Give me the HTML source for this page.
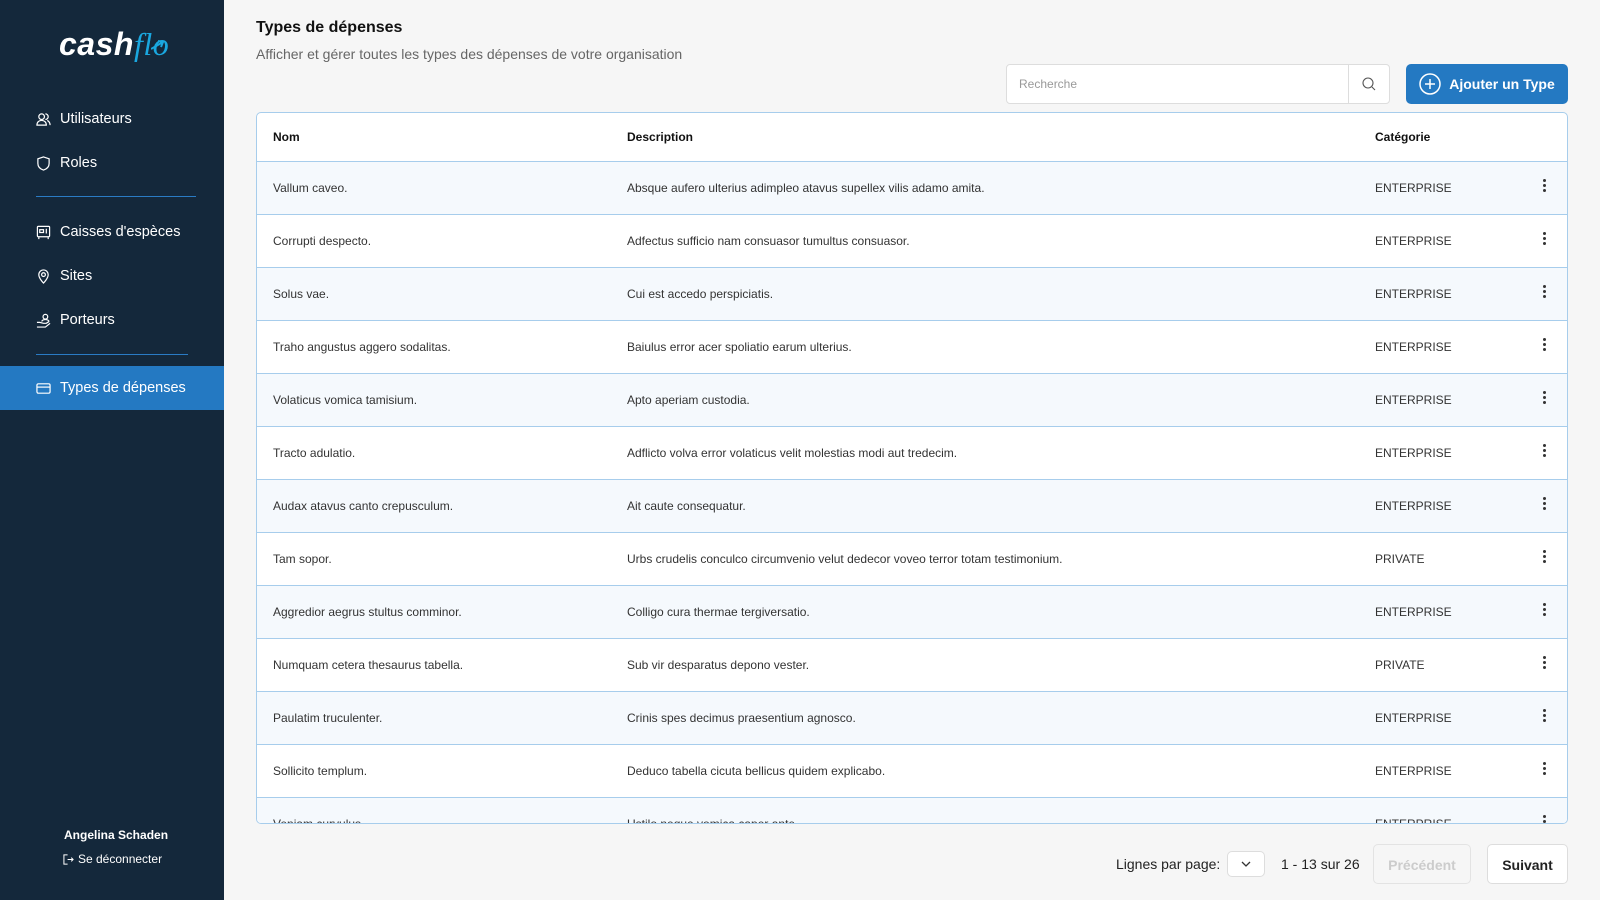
<!DOCTYPE html>
<html><head><meta charset="utf-8"><style>
*{box-sizing:border-box;margin:0;padding:0}
body{width:1600px;height:900px;overflow:hidden;background:#f6f6f6;font-family:"Liberation Sans",sans-serif;position:relative;color:#222}
.sb{position:absolute;left:0;top:0;width:224px;height:900px;background:#14283b;color:#fff}
.logo{position:absolute;left:59px;top:26px;font-size:32px;font-style:italic;font-weight:bold;letter-spacing:0.5px}
.logo span{color:#1aa7df;font-family:"Liberation Serif",serif;font-weight:normal}
.nav{position:absolute;left:36px;font-size:14.5px;display:flex;align-items:center;gap:9px}
.nav svg{width:15px;height:15px}
.div{position:absolute;left:36px;height:1px;background:#2a7bc4}
.act{position:absolute;left:0;top:366px;width:224px;height:44px;background:#2479c2}
.h1{position:absolute;left:256px;top:19px;font-size:16px;font-weight:bold;color:#111}
.sub{position:absolute;left:256px;top:46px;font-size:14px;color:#666}
.search{position:absolute;left:1006px;top:64px;width:384px;height:40px;background:#fff;border:1px solid #ddd;border-radius:4px}
.search .ph{position:absolute;left:12px;top:12px;font-size:12px;color:#999}
.search .ic{position:absolute;right:0;top:0;width:41px;height:38px;border-left:1px solid #ddd}
.btn{position:absolute;left:1406px;top:64px;width:162px;height:40px;background:#2479c2;border-radius:5px;color:#fff;font-size:14px;font-weight:bold;display:flex;align-items:center;justify-content:center;gap:8px}
.tbl{position:absolute;left:256px;top:112px;width:1312px;height:712px;background:#fff;border:1px solid #a7cdec;border-radius:5px;overflow:hidden}
.row{position:absolute;left:0;width:1310px;height:53px;border-bottom:1px solid #a7cdec;font-size:12px;color:#333}
.row div{position:absolute;top:19px}
.row .c1{left:16px}.row .c2{left:370px}.row .c3{left:1118px}
.row .d{left:1286px;top:17px;width:3px}
.row .d i{display:block;width:3px;height:3px;border-radius:50%;background:#333;margin-bottom:2px}
.hd{height:49px;font-weight:bold;color:#111}
.hd div{top:17px}
.pg{position:absolute;font-size:14px;color:#222}
.box{position:absolute;background:#fff;border:1px solid #ddd;border-radius:5px}
</style></head><body>
<div class="sb">
<div class="logo">cash<span>flo</span><svg width="14" height="12" style="position:absolute;left:92px;top:13px" viewBox="0 0 14 12"><path d="M0 10 L12 3 M7 2 L12 3 L10 8" stroke="#1aa7df" stroke-width="2" fill="none"/></svg></div>
<div class="nav" style="top:111px"><svg viewBox="0 0 16 16" fill="none" stroke="#fff" stroke-width="1.3"><circle cx="6" cy="5" r="3"/><path d="M1 14c0-3 2-5 5-5s5 2 5 5zM10 2a3 3 0 010 6M12 9c2 1 3 3 3 5"/></svg>Utilisateurs</div>
<div class="nav" style="top:155px"><svg viewBox="0 0 16 16" fill="none" stroke="#fff" stroke-width="1.3"><path d="M8 1l6 2v5c0 4-3 6-6 7-3-1-6-3-6-7V3z"/></svg>Roles</div>
<div class="div" style="top:196px;width:160px"></div>
<div class="nav" style="top:224px"><svg viewBox="0 0 16 16" fill="none" stroke="#fff" stroke-width="1.3"><rect x="1.5" y="1.5" width="13" height="11" rx="1"/><rect x="4" y="5" width="4" height="3"/><path d="M11 4v5M3 13v2M13 13v2"/></svg>Caisses d'espèces</div>
<div class="nav" style="top:268px"><svg viewBox="0 0 16 16" fill="none" stroke="#fff" stroke-width="1.3"><path d="M8 15s5-5 5-9a5 5 0 00-10 0c0 4 5 9 5 9z"/><circle cx="8" cy="6" r="2"/></svg>Sites</div>
<div class="nav" style="top:312px"><svg viewBox="0 0 16 16" fill="none" stroke="#fff" stroke-width="1.3"><circle cx="10" cy="4" r="2.5"/><path d="M1 10h3l4 1h3l3-2M1 15h9l5-4M6 9c1-2 3-2 4-2s3 0 4 2"/></svg>Porteurs</div>
<div class="div" style="top:354px;width:152px"></div>
<div class="act"></div>
<div class="nav" style="top:380px"><svg viewBox="0 0 16 16" fill="none" stroke="#fff" stroke-width="1.3"><rect x="1" y="3" width="14" height="10" rx="1.5"/><path d="M1 6.5h14"/></svg>Types de dépenses</div>
<div style="position:absolute;left:64px;top:828px;font-size:12px;font-weight:bold">Angelina Schaden</div>
<div style="position:absolute;left:63px;top:852px;font-size:12px;display:flex;gap:4px;align-items:center"><svg width="11" height="11" viewBox="0 0 12 12" fill="none" stroke="#fff" stroke-width="1.1"><path d="M5 1H1v10h4M5 6h6M9 4l2 2-2 2"/></svg>Se déconnecter</div>
</div>
<div class="h1">Types de dépenses</div>
<div class="sub">Afficher et gérer toutes les types des dépenses de votre organisation</div>
<div class="search"><div class="ph">Recherche</div><div class="ic"><svg width="14" height="14" style="margin:12px 13px" viewBox="0 0 14 14" fill="none" stroke="#555" stroke-width="1.1"><circle cx="6" cy="6" r="5"/><path d="M10 10l3 3"/></svg></div></div>
<div class="btn"><svg width="22" height="22" viewBox="0 0 22 22" fill="none" stroke="#fff" stroke-width="1.5"><circle cx="11" cy="11" r="10"/><path d="M11 6v10M6 11h10"/></svg>Ajouter un Type</div>
<div class="tbl">
<div class="row hd" style="top:0"><div class="c1">Nom</div><div class="c2">Description</div><div class="c3">Catégorie</div></div>
<div class="row" style="top:49px;background:#f5f9fd"><div class="c1">Vallum caveo.</div><div class="c2">Absque aufero ulterius adimpleo atavus supellex vilis adamo amita.</div><div class="c3">ENTERPRISE</div><div class="d"><i></i><i></i><i></i></div></div>
<div class="row" style="top:102px"><div class="c1">Corrupti despecto.</div><div class="c2">Adfectus sufficio nam consuasor tumultus consuasor.</div><div class="c3">ENTERPRISE</div><div class="d"><i></i><i></i><i></i></div></div>
<div class="row" style="top:155px;background:#f5f9fd"><div class="c1">Solus vae.</div><div class="c2">Cui est accedo perspiciatis.</div><div class="c3">ENTERPRISE</div><div class="d"><i></i><i></i><i></i></div></div>
<div class="row" style="top:208px"><div class="c1">Traho angustus aggero sodalitas.</div><div class="c2">Baiulus error acer spoliatio earum ulterius.</div><div class="c3">ENTERPRISE</div><div class="d"><i></i><i></i><i></i></div></div>
<div class="row" style="top:261px;background:#f5f9fd"><div class="c1">Volaticus vomica tamisium.</div><div class="c2">Apto aperiam custodia.</div><div class="c3">ENTERPRISE</div><div class="d"><i></i><i></i><i></i></div></div>
<div class="row" style="top:314px"><div class="c1">Tracto adulatio.</div><div class="c2">Adflicto volva error volaticus velit molestias modi aut tredecim.</div><div class="c3">ENTERPRISE</div><div class="d"><i></i><i></i><i></i></div></div>
<div class="row" style="top:367px;background:#f5f9fd"><div class="c1">Audax atavus canto crepusculum.</div><div class="c2">Ait caute consequatur.</div><div class="c3">ENTERPRISE</div><div class="d"><i></i><i></i><i></i></div></div>
<div class="row" style="top:420px"><div class="c1">Tam sopor.</div><div class="c2">Urbs crudelis conculco circumvenio velut dedecor voveo terror totam testimonium.</div><div class="c3">PRIVATE</div><div class="d"><i></i><i></i><i></i></div></div>
<div class="row" style="top:473px;background:#f5f9fd"><div class="c1">Aggredior aegrus stultus comminor.</div><div class="c2">Colligo cura thermae tergiversatio.</div><div class="c3">ENTERPRISE</div><div class="d"><i></i><i></i><i></i></div></div>
<div class="row" style="top:526px"><div class="c1">Numquam cetera thesaurus tabella.</div><div class="c2">Sub vir desparatus depono vester.</div><div class="c3">PRIVATE</div><div class="d"><i></i><i></i><i></i></div></div>
<div class="row" style="top:579px;background:#f5f9fd"><div class="c1">Paulatim truculenter.</div><div class="c2">Crinis spes decimus praesentium agnosco.</div><div class="c3">ENTERPRISE</div><div class="d"><i></i><i></i><i></i></div></div>
<div class="row" style="top:632px"><div class="c1">Sollicito templum.</div><div class="c2">Deduco tabella cicuta bellicus quidem explicabo.</div><div class="c3">ENTERPRISE</div><div class="d"><i></i><i></i><i></i></div></div>
<div class="row" style="top:685px;background:#f5f9fd"><div class="c1">Veniam curvulus.</div><div class="c2">Ustilo neque vomica caper ante.</div><div class="c3">ENTERPRISE</div><div class="d"><i></i><i></i><i></i></div></div>
</div>
<div class="pg" style="left:1116px;top:856px">Lignes par page:</div>
<div class="box" style="left:1227px;top:851px;width:38px;height:26px"><svg width="10" height="6" style="position:absolute;left:13px;top:9px" viewBox="0 0 10 6" fill="none" stroke="#333" stroke-width="1.3"><path d="M1 1l4 4 4-4"/></svg></div>
<div class="pg" style="left:1281px;top:856px">1 - 13 sur 26</div>
<div class="box" style="left:1373px;top:844px;width:98px;height:40px;border-color:#e3e3e3;background:#f6f6f6"><div style="text-align:center;margin-top:12px;font-size:14px;font-weight:bold;color:#ccc">Précédent</div></div>
<div class="box" style="left:1487px;top:844px;width:81px;height:40px"><div style="text-align:center;margin-top:12px;font-size:14px;font-weight:bold;color:#222">Suivant</div></div>
</body></html>
